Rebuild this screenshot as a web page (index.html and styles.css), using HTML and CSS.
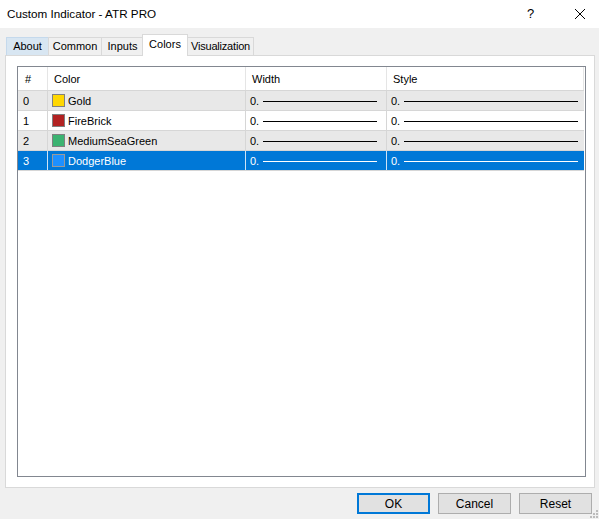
FILE: index.html
```html
<!DOCTYPE html>
<html>
<head>
<meta charset="utf-8">
<title>Custom Indicator - ATR PRO</title>
<link rel="stylesheet" href="styles.css">
</head>
<body>
<div class="window">
  <div class="titlebar">
    <span class="title">Custom Indicator - ATR PRO</span>
    <span class="help">?</span>
    <span class="close"><svg width="12" height="12" viewBox="0 0 12 12"><path d="M1 1 L11 11 M11 1 L1 11" stroke="#000" stroke-width="1" fill="none"/></svg></span>
  </div>
  <div class="tabs">
    <div class="tab hover t-about">About</div>
    <div class="tab t-common">Common</div>
    <div class="tab t-inputs">Inputs</div>
    <div class="tab active t-colors">Colors</div>
    <div class="tab t-vis">Visualization</div>
  </div>
  <div class="panel">
    <div class="list">
      <div class="row head">
        <div class="c num">#</div>
        <div class="c color">Color</div>
        <div class="c width">Width</div>
        <div class="c style">Style</div>
      </div>
      <div class="row alt">
        <div class="c num">0</div>
        <div class="c color"><span class="sw sw-gold"></span>Gold</div>
        <div class="c width">0.<span class="ln"></span></div>
        <div class="c style">0.<span class="ln"></span></div>
      </div>
      <div class="row">
        <div class="c num">1</div>
        <div class="c color"><span class="sw sw-fire"></span>FireBrick</div>
        <div class="c width">0.<span class="ln"></span></div>
        <div class="c style">0.<span class="ln"></span></div>
      </div>
      <div class="row alt">
        <div class="c num">2</div>
        <div class="c color"><span class="sw sw-green"></span>MediumSeaGreen</div>
        <div class="c width">0.<span class="ln"></span></div>
        <div class="c style">0.<span class="ln"></span></div>
      </div>
      <div class="row sel">
        <div class="c num">3</div>
        <div class="c color"><span class="sw sw-blue"></span>DodgerBlue</div>
        <div class="c width">0.<span class="ln"></span></div>
        <div class="c style">0.<span class="ln"></span></div>
      </div>
    </div>
  </div>
  <div class="buttons">
    <button class="btn default">OK</button>
    <button class="btn">Cancel</button>
    <button class="btn">Reset</button>
  </div>
  <svg class="grip" width="8" height="8" viewBox="0 0 8 8">
    <rect x="6" y="0" width="2" height="2" fill="#bcbcbc"/>
    <rect x="3" y="3" width="2" height="2" fill="#bcbcbc"/>
    <rect x="6" y="3" width="2" height="2" fill="#bcbcbc"/>
    <rect x="0" y="6" width="2" height="2" fill="#bcbcbc"/>
    <rect x="3" y="6" width="2" height="2" fill="#bcbcbc"/>
    <rect x="6" y="6" width="2" height="2" fill="#bcbcbc"/>
  </svg>
</div>
</body>
</html>
```
FILE: styles.css
```css
html, body {
  margin: 0;
  padding: 0;
}
body {
  background: #f0f0f0;
  font-family: "Liberation Sans", Arial, sans-serif;
  font-size: 11px;
  color: #000;
}
.window {
  position: relative;
  width: 599px;
  height: 519px;
  background: #f0f0f0;
  display: flex;
  flex-direction: column;
}
.titlebar {
  height: 28px;
  background: #fff;
  display: flex;
  align-items: center;
  padding-left: 7px;
  box-sizing: border-box;
}
.title {
  font-size: 11.7px;
  flex: 1;
  padding-bottom: 1px;
}
.help {
  font-size: 13px;
  width: 12px;
  margin-right: 35px;
  padding-bottom: 1px;
}
.close {
  display: flex;
  margin-right: 13px;
}
.tabs {
  display: flex;
  align-items: flex-end;
  padding: 7px 0 0 6px;
  height: 27px;
  box-sizing: border-box;
  position: relative;
  z-index: 1;
}
.tab {
  height: 18px;
  line-height: 17px;
  text-align: center;
  border: 1px solid #d9d9d9;
  border-bottom: none;
  background: #f0f0f0;
  box-sizing: border-box;
  margin-right: -1px;
  white-space: nowrap;
}
.t-about { width: 43px; }
.t-common { width: 54px; }
.t-inputs { width: 43px; }
.t-colors { width: 46px; }
.t-vis { width: 67px; letter-spacing: -0.2px; }
.tab.hover {
  background: #d8e6f2;
  border-color: #c5d9ec;
}
.tab.active {
  height: 22px;
  line-height: 19px;
  background: #fff;
  margin-bottom: -1px;
  margin-left: -1px;
  margin-right: -1px;
  position: relative;
  z-index: 2;
}
.panel {
  margin: 0 4px 0 5px;
  height: 433px;
  border: 1px solid #d9d9d9;
  background: #fff;
  box-sizing: border-box;
  padding: 10px 8px 10px 11px;
  display: flex;
}
.list {
  flex: 1;
  border: 1px solid #828790;
  background: #fff;
}
.row {
  display: flex;
  height: 20px;
  width: 566px;
  border-bottom: 1px solid #d6d6d6;
  box-sizing: border-box;
  align-items: center;
}
.row.head {
  height: 24px;
}
.row.head .c {
  border-right: 1px solid #e5e5e5;
}
.row.alt {
  background: #e8e8e8;
}
.row.sel {
  background: #0078d7;
  color: #fff;
}
.c {
  height: 100%;
  display: flex;
  align-items: center;
  box-sizing: border-box;
  border-right: 1px solid #d6d6d6;
  white-space: nowrap;
}
.row.sel .c {
  border-right-color: #cfe3f5;
}
.num {
  width: 30px;
  padding-left: 5px;
}
.row.head .num {
  padding-left: 7px;
}
.color {
  width: 198px;
  padding-left: 4px;
}
.row.head .color {
  padding-left: 6px;
}
.width {
  width: 141px;
  padding-left: 4px;
}
.row.head .width {
  padding-left: 6px;
}
.style {
  width: 197px;
  padding-left: 4px;
  border-right: none;
}
.row.head .style {
  padding-left: 6px;
  border-right: 1px solid #e5e5e5;
}
.sw {
  width: 11px;
  height: 11px;
  border: 1px solid #808080;
  margin-right: 3px;
  flex: none;
}
.sw-gold { background: #ffd700; }
.sw-fire { background: #b22222; }
.sw-green { background: #3cb371; }
.sw-blue { background: #1e90ff; border-color: #9a9a9a; }
.ln {
  flex: 1;
  height: 1px;
  background: #000;
  margin: 1px 9px 0 4px;
}
.style .ln {
  margin-right: 6px;
}
.row.sel .ln {
  background: #fff;
}
.buttons {
  display: flex;
  justify-content: flex-end;
  gap: 8px;
  padding: 5px 7px 0 0;
}
.btn {
  width: 73px;
  height: 21px;
  background: #e1e1e1;
  border: 1px solid #adadad;
  font-family: "Liberation Sans", Arial, sans-serif;
  font-size: 12px;
  color: #000;
  padding: 0;
  margin: 0;
  box-sizing: border-box;
}
.btn.default {
  border: 2px solid #0078d7;
}
.grip {
  position: absolute;
  right: 1px;
  bottom: 1px;
}
```
